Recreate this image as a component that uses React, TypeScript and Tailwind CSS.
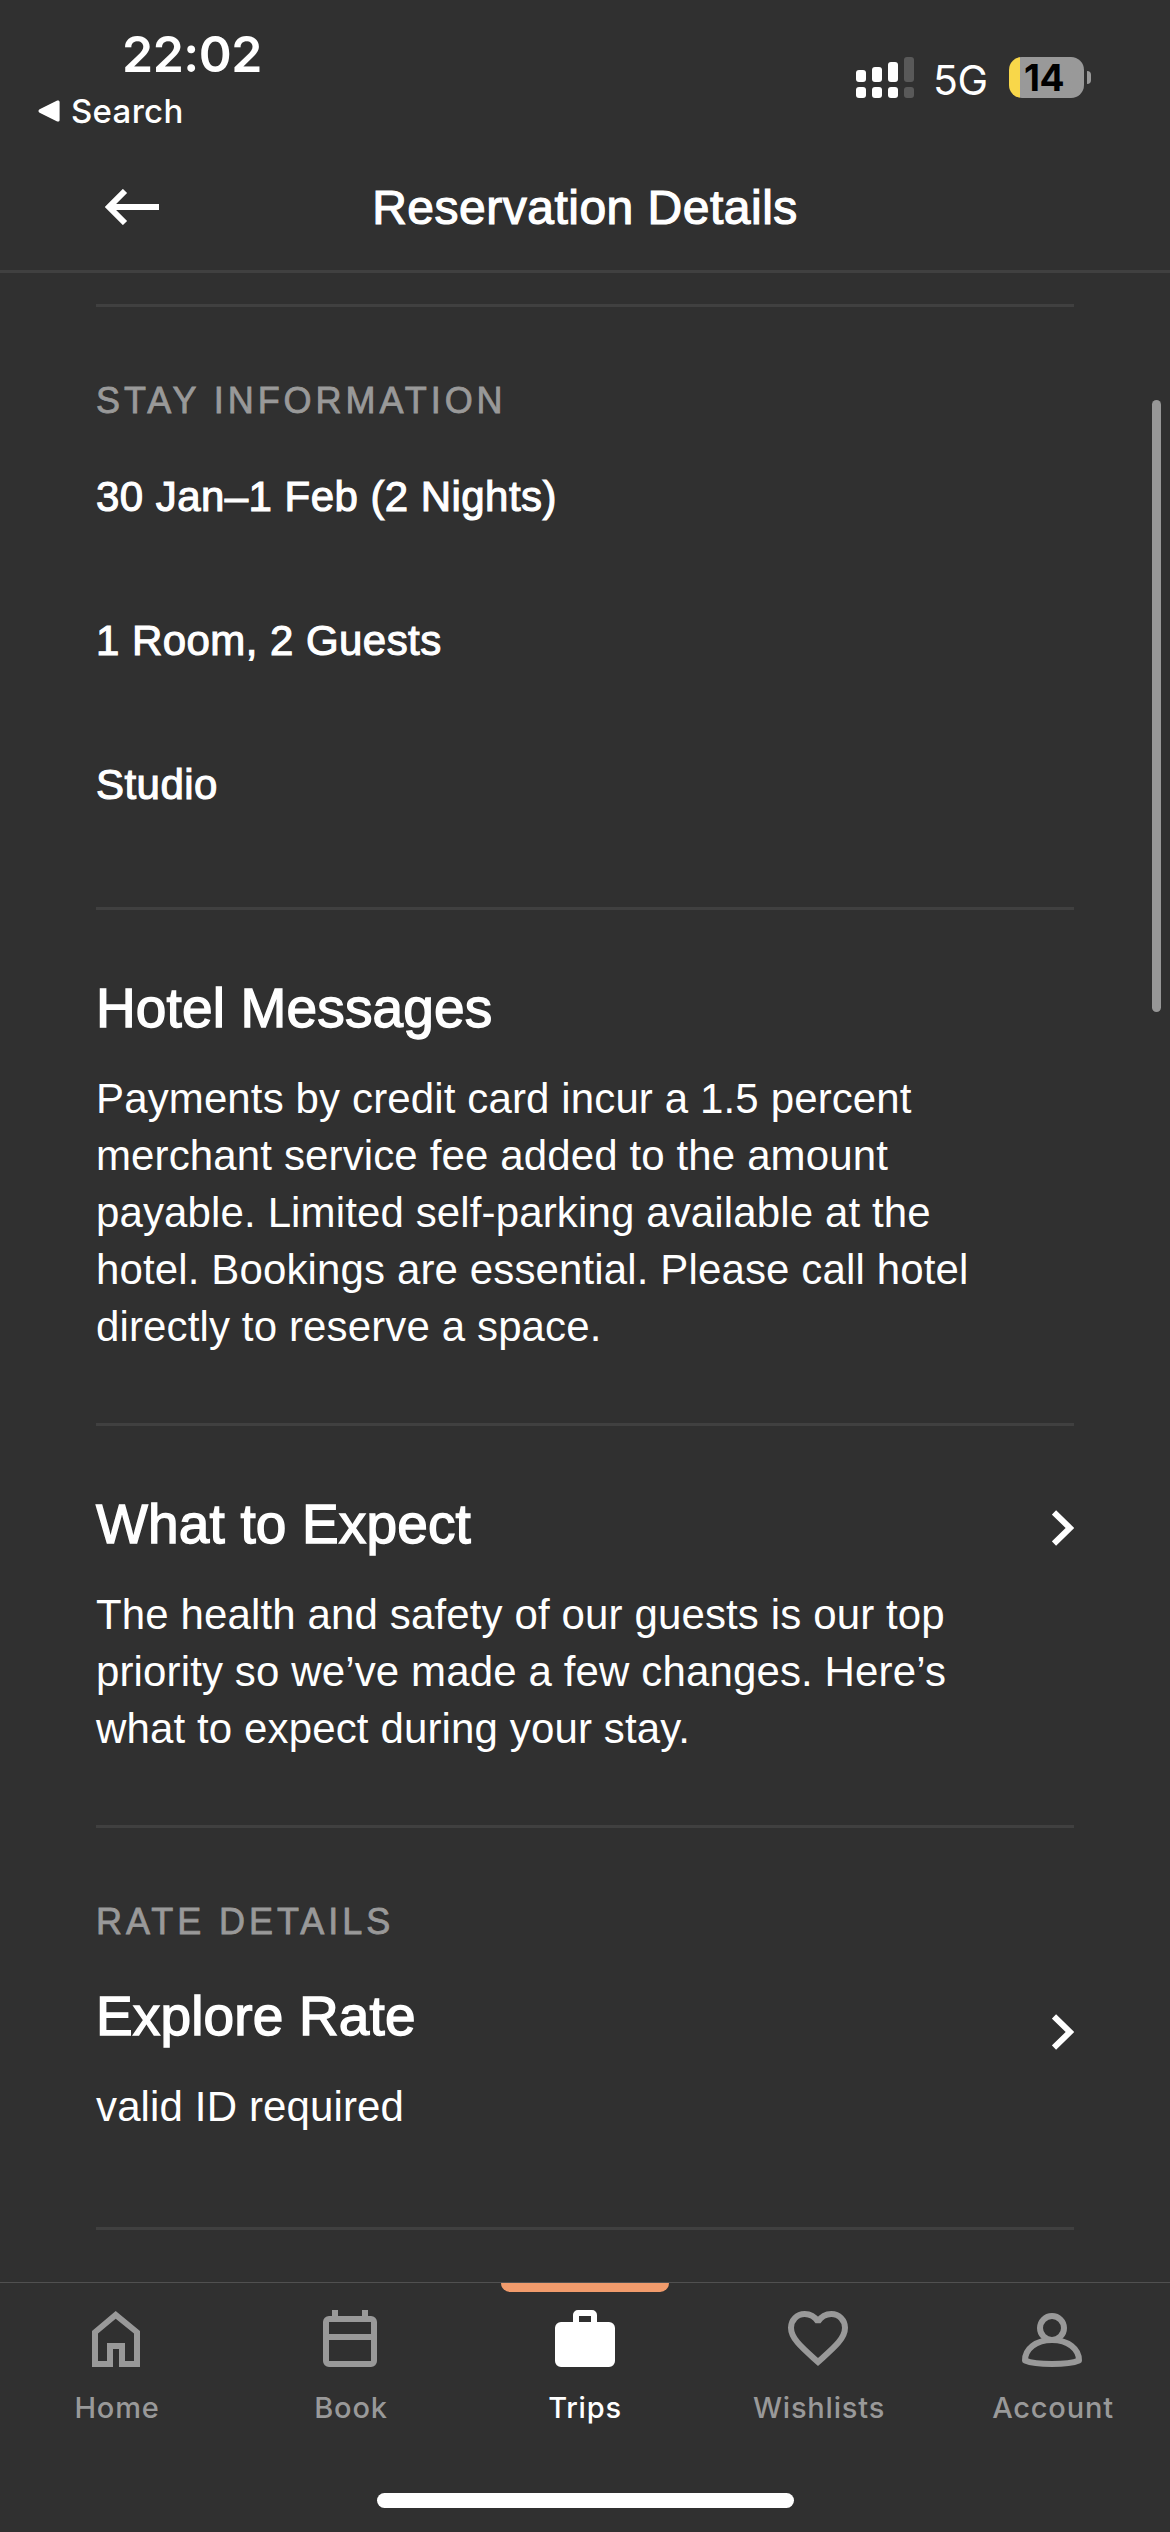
import type { ReactNode } from 'react'

function StatusBar() {
  return (
    <div className="h-[144px] shrink-0 flex justify-between font-['Inter',sans-serif]">
      <div className="pt-6 pl-[38px]">
        <div className="pl-[84px] text-[50px] leading-[60px] font-semibold tracking-[-0.5px]">22:02</div>
        <div className="mt-[7px] flex items-center text-[33px] leading-10 font-medium tracking-[0.3px]">
          <svg className="w-[22px] h-[22px] mr-[11px]" viewBox="0 0 22 22" fill="currentColor">
            <path d="M19.2.6 1.6 9.2c-1.5.8-1.5 2.8 0 3.6l17.6 8.6c1.2.6 2.4-.1 2.4-1.4V2C21.6.7 20.4 0 19.2.6Z" />
          </svg>
          Search
        </div>
      </div>

      <div className="pt-[57px] pr-[79px] flex items-start">
        <svg className="w-[58px] h-[41px]" viewBox="0 0 58 41" fill="currentColor">
          <rect x="0" y="13" width="10" height="12" rx="3" />
          <rect x="16" y="10" width="10" height="15" rx="3" />
          <rect x="32" y="5" width="10" height="20" rx="3" />
          <rect x="48" y="0" width="10" height="25" rx="3" fill="#595959" />
          <rect x="0" y="30" width="10" height="11" rx="3" />
          <rect x="16" y="30" width="10" height="11" rx="3" />
          <rect x="32" y="30" width="10" height="11" rx="3" />
          <rect x="48" y="30" width="10" height="11" rx="3" fill="#595959" />
        </svg>
        <div className="ml-[19px] w-[58px] text-[41px] leading-[47px] tracking-[-0.5px]">5G</div>
        <div className="ml-[18px] w-[75px] h-[41px] rounded-[13px] bg-linear-to-r from-[#f8d74a] from-[11px] to-[#999999] to-[11px]">
          <div className="pl-[15px] text-[37px] leading-[41px] font-bold text-black tracking-[-0.5px]">14</div>
        </div>
        <div className="ml-[3px] mt-[14px] w-1 h-[13px] rounded-r-full bg-[#999999]" />
      </div>
    </div>
  )
}

function Header() {
  return (
    <div className="h-[129px] shrink-0 border-b-3 border-[#404040] grid grid-cols-[1fr_auto_1fr] items-center">
      <svg className="ml-[105px] w-[54px] h-[36px]" viewBox="0 0 54 36" fill="none" stroke="currentColor" strokeWidth="6">
        <path d="M54 18H5M20 2 4 18l16 16" />
      </svg>
      <h1 className="pt-0.5 text-[48px] leading-[60px] tracking-[0.5px] [-webkit-text-stroke:1.2px_white]">Reservation Details</h1>
    </div>
  )
}

function Chevron({ className }: { className: string }) {
  return (
    <svg className={`w-[22px] h-9 shrink-0 ${className}`} viewBox="0 0 22 36" fill="none" stroke="currentColor" strokeWidth="6">
      <path d="M2 2.5 18 18 2 33.5" />
    </svg>
  )
}

function Label({ children }: { children: ReactNode }) {
  return (
    <div className="text-[36px] leading-[48px] tracking-[3.95px] text-[#999999] [-webkit-text-stroke:0.8px_#999999]">{children}</div>
  )
}

function Title({ children }: { children: ReactNode }) {
  return <h2 className="text-[55px] leading-[66px] tracking-[0.15px] [-webkit-text-stroke:1.4px_white]">{children}</h2>
}

function Body({ children }: { children: ReactNode }) {
  return <p className="max-w-[906px] text-[42px] leading-[57px] tracking-[0.13px]">{children}</p>
}

const stay = ['30 Jan–1 Feb (2 Nights)', '1 Room, 2 Guests', 'Studio']

const tabs = [
  {
    name: 'Home',
    icon: (
      <path fillRule="evenodd" d="M28.7 2 53 22v36H32V40h-6v18H5V22ZM28.7 9.8 11 24.5V52h9V34h18v18h9V24.5Z" />
    ),
  },
  {
    name: 'Book',
    icon: (
      <>
        <path d="M11 1h6v8h-6ZM41 1h6v8h-6ZM5 25h48v6H5Z" />
        <path fillRule="evenodd" d="M8 7h42a6 6 0 0 1 6 6v39a6 6 0 0 1-6 6H8a6 6 0 0 1-6-6V13a6 6 0 0 1 6-6ZM8 13v39h42V13Z" />
      </>
    ),
  },
  {
    name: 'Trips',
    active: true,
    icon: (
      <path
        fillRule="evenodd"
        d="M18 13V6a5 5 0 0 1 5-5h14a5 5 0 0 1 5 5v7h12a6 6 0 0 1 6 6v33a6 6 0 0 1-6 6H6a6 6 0 0 1-6-6V19a6 6 0 0 1 6-6ZM24 13h12V7H24Z"
      />
    ),
  },
  {
    name: 'Wishlists',
    icon: (
      <path
        fill="none"
        stroke="currentColor"
        strokeWidth="6"
        strokeMiterlimit="1.5"
        d="M29 12.5C26 8 21 5 15.7 5 7.8 5 2 11.2 2 18.7 2 30 14 39.5 29 53c15-13.5 27-23 27-34.3C56 11.2 50.2 5 42.3 5 37 5 32 8 29 12.5Z"
      />
    ),
  },
  {
    name: 'Account',
    icon: (
      <g fill="none" stroke="currentColor" strokeWidth="6" strokeLinejoin="round">
        <circle cx="29" cy="19" r="12" />
        <path d="M2 51.5C2 40 13 31 29 31s27 9 27 20.5C50 54 40 55 29 55S8 54 2 51.5Z" />
      </g>
    ),
  },
]

function TabBar() {
  return (
    <nav className="h-[250px] shrink-0 border-t border-[#505050] bg-[#303030] flex flex-col items-center justify-between pb-6">
      <div className="w-full grid grid-cols-5">
        {tabs.map((tab) => (
          <div key={tab.name} className={`flex flex-col items-center ${tab.active ? 'text-white' : 'text-[#999999]'}`}>
            <div className={`w-[168px] h-[9px] rounded-b-[9px] ${tab.active ? 'bg-[#f19b6c]' : ''}`} />
            <svg className="mt-[17px] w-[60px] h-[60px] overflow-visible" viewBox="0 0 60 60" fill="currentColor">
              {tab.icon}
            </svg>
            <div className="mt-[21px] text-[29px] leading-9 font-medium tracking-[0.8px] font-['Inter',sans-serif]">{tab.name}</div>
          </div>
        ))}
      </div>
      <div className="w-[417px] h-[15px] rounded-full bg-white" />
    </nav>
  )
}

export default function App() {
  return (
    <div className="relative w-[1170px] h-[2532px] overflow-hidden flex flex-col bg-[#303030] text-white font-['Liberation_Sans',Arial,sans-serif]">
      <StatusBar />
      <Header />

      <main className="flex-1 min-h-0 overflow-hidden pt-[31px] px-24">
        {/* Stay */}
        <section className="border-t-3 border-[#404040] pt-[70px] pb-[94px]">
          <Label>STAY INFORMATION</Label>
          <div className="mt-[43px] flex flex-col gap-[87px]">
            {stay.map((line) => (
              <div key={line} className="text-[42px] leading-[57px] tracking-[0.45px] [-webkit-text-stroke:1.1px_white]">
                {line}
              </div>
            ))}
          </div>
        </section>

        {/* Messages */}
        <section className="border-t-3 border-[#404040] pt-[65px] pb-[68px] flex flex-col gap-[29px]">
          <Title>Hotel Messages</Title>
          <Body>
            Payments by credit card incur a 1.5 percent merchant service fee added to the amount payable. Limited
            self-parking available at the hotel. Bookings are essential. Please call hotel directly to reserve a space.
          </Body>
        </section>

        {/* What to Expect */}
        <section className="border-t-3 border-[#404040] pt-[65px] pb-[68px] flex justify-between">
          <div className="flex flex-col gap-[29px]">
            <Title>What to Expect</Title>
            <Body>
              The health and safety of our guests is our top priority so we’ve made a few changes. Here’s what to expect
              during your stay.
            </Body>
          </div>
          <Chevron className="mt-[19px]" />
        </section>

        {/* Rate */}
        <section className="border-t-3 border-[#404040] pt-[70px] pb-[92px]">
          <Label>RATE DETAILS</Label>
          <div className="mt-[37px] flex justify-between">
            <div className="flex flex-col gap-[29px]">
              <Title>Explore Rate</Title>
              <Body>valid ID required</Body>
            </div>
            <Chevron className="mt-[31px]" />
          </div>
        </section>
        <div className="border-t-3 border-[#404040]" />
      </main>

      <TabBar />

      {/* Scroll indicator */}
      <div className="absolute right-[9px] top-[400px] w-[9px] h-[612px] rounded-full bg-[#979797]" />
    </div>
  )
}
